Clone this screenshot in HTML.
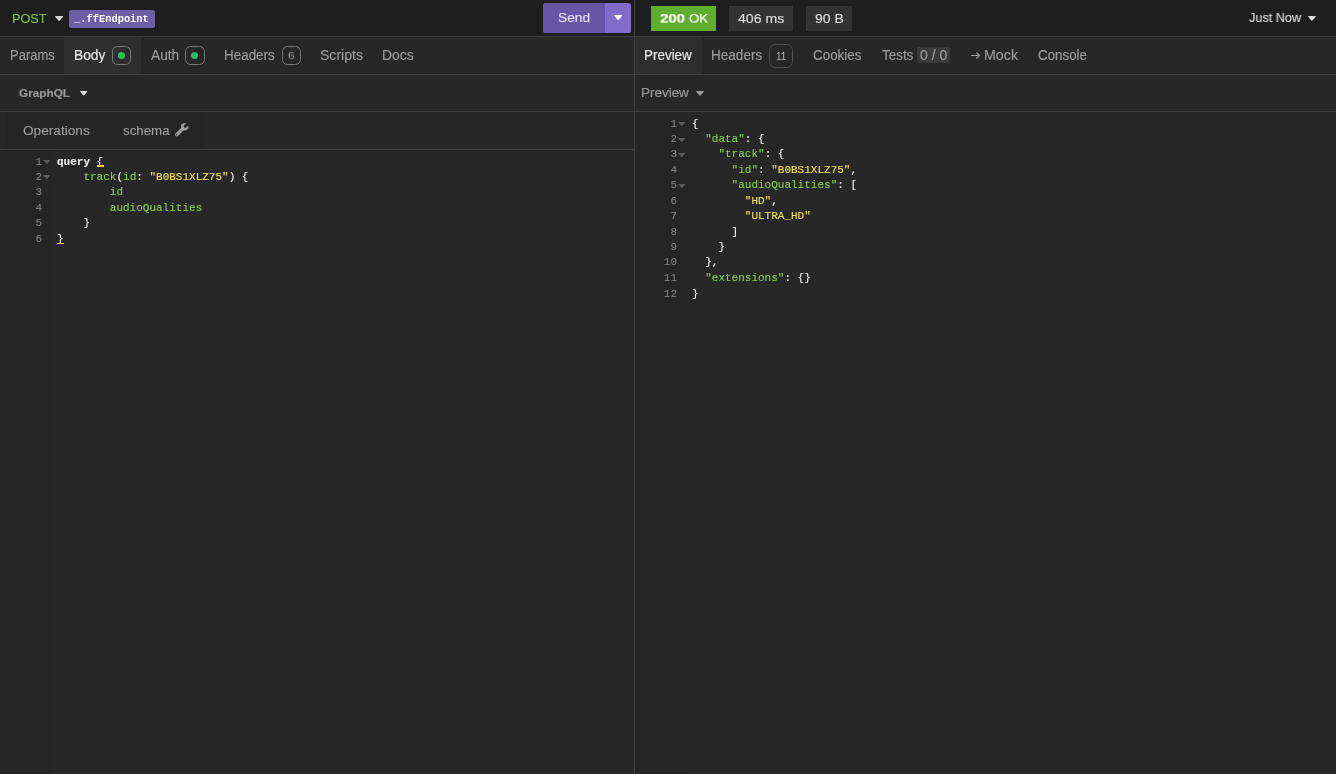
<!DOCTYPE html>
<html><head><meta charset="utf-8">
<style>
*{box-sizing:border-box;margin:0;padding:0}
html,body{width:1336px;height:774px;overflow:hidden;background:#272727;font-family:"Liberation Sans",sans-serif;color:#ddd}
.abs{position:absolute}
#root{position:relative;width:1336px;height:774px;background:#272727;overflow:hidden}
.topbar{left:0;top:0;width:1336px;height:36px;background:#1e1e1e}
.hl{height:1px;background:#3e3e3e;left:0}
.vl{width:1px;background:#424242}
.t,.code,.ln{will-change:transform}
.t{position:absolute;white-space:nowrap;-webkit-text-stroke:0.15px;transform-origin:0 0;font-size:13px;line-height:16px;color:#9c9c9c}
#b6,#b11{-webkit-text-stroke:0}
.badge{position:absolute;width:19.6px;height:19.6px;border:1px solid #7a7a7a;border-radius:5.5px;top:45.7px}
.dot{position:absolute;width:7px;height:7px;border-radius:50%;background:#27c15a;left:5.4px;top:5.4px}
.code{position:absolute;font-family:"Liberation Mono",monospace;font-size:11px;line-height:14.705px;white-space:pre;color:#f2f2f2;transform-origin:0 0;transform:scaleY(1.05);-webkit-text-stroke:0.1px}
.ln{position:absolute;font-family:"Liberation Mono",monospace;font-size:11px;line-height:14.705px;white-space:pre;color:#858585;text-align:right;transform-origin:0 0;transform:scaleY(1.05);-webkit-text-stroke:0.05px}
.g{color:#86d04c}.y{color:#f2e055}.w{color:#f4f4f4}
.pill{position:absolute;top:6px;height:25px;background:#333}
svg{position:absolute;overflow:visible}
</style></head><body><div id="root">
<div class="abs topbar"></div>
<div class="abs hl" style="top:36px;width:1336px"></div>
<div class="abs hl" style="top:74px;width:1336px"></div>
<div class="abs hl" style="top:111px;width:1336px"></div>
<div class="abs hl" style="top:149px;width:634px"></div>
<div class="abs vl" style="left:634px;top:0;height:774px"></div>

<!-- left top bar -->
<svg style="left:54.6px;top:16.2px" width="8.2" height="5.2" viewBox="0 0 8 5"><path d="M0.6 0H7.4Q8.2 0.2 7.7 0.9L4.5 4.6Q4 5.1 3.5 4.6L0.3 0.9Q-0.2 0.2 0.6 0Z" fill="#d6d6d6"/></svg>
<div class="abs" style="left:69px;top:10px;width:86px;height:18px;background:#6c5fa6;border-radius:2.5px"></div>
<div id="tag" class="code" style="left:74.3px;top:11.5px;color:#fff;font-size:10.4px;line-height:15px;font-weight:bold;transform:none;-webkit-text-stroke:0">_.ffEndpoint</div>
<div class="abs" style="left:543px;top:3px;width:62px;height:30px;background:#6557a5;border-radius:2px 0 0 2px"></div>
<div class="abs" style="left:605px;top:3px;width:26px;height:30px;background:#806dca;border-radius:0 2px 2px 0"></div>
<svg style="left:614.4px;top:15.3px" width="8.4" height="5.1" viewBox="0 0 8 5"><path d="M0.6 0H7.4Q8.2 0.2 7.7 0.9L4.5 4.6Q4 5.1 3.5 4.6L0.3 0.9Q-0.2 0.2 0.6 0Z" fill="#fff"/></svg>

<!-- active tab backgrounds -->
<div class="abs" style="left:64px;top:37px;width:77px;height:37px;background:#2e2e2e"></div>
<div class="abs" style="left:635px;top:37px;width:67px;height:37px;background:#2e2e2e"></div>
<div class="badge" style="left:111.7px"><div class="dot"></div></div>
<div class="badge" style="left:185px"><div class="dot"></div></div>
<div class="badge" style="left:281.7px"></div>
<div class="badge" style="left:768.7px;width:24px;height:23.5px;top:44.1px;border-color:#525252;border-radius:6.5px"></div>
<div class="abs" style="left:917px;top:47.2px;width:33px;height:15.4px;background:#3a3a3a;border-radius:2px"></div>

<!-- GraphQL row -->
<svg style="left:80px;top:91.2px" width="7.4" height="4.7" viewBox="0 0 8 5"><path d="M0.6 0H7.4Q8.2 0.2 7.7 0.9L4.5 4.6Q4 5.1 3.5 4.6L0.3 0.9Q-0.2 0.2 0.6 0Z" fill="#e0e0e0"/></svg>
<svg style="left:696px;top:90.6px" width="8" height="4.9" viewBox="0 0 8 5"><path d="M0.6 0H7.4Q8.2 0.2 7.7 0.9L4.5 4.6Q4 5.1 3.5 4.6L0.3 0.9Q-0.2 0.2 0.6 0Z" fill="#9c9c9c"/></svg>
<svg style="left:1308.3px;top:16.2px" width="7.8" height="4.9" viewBox="0 0 8 5"><path d="M0.6 0H7.4Q8.2 0.2 7.7 0.9L4.5 4.6Q4 5.1 3.5 4.6L0.3 0.9Q-0.2 0.2 0.6 0Z" fill="#ddd"/></svg>

<!-- operations row -->
<div class="abs" style="left:6px;top:112px;width:198px;height:37px;background:#252525"></div>
<!-- wrench -->
<svg style="left:174.5px;top:123.4px" width="13.5" height="13.5" viewBox="0 0 512 512"><path fill="#9c9c9c" d="M507.73 109.1c-2.24-9.03-13.54-12.09-20.12-5.51l-74.36 74.36-67.88-11.31-11.31-67.88 74.36-74.36c6.62-6.62 3.43-17.9-5.66-20.16-47.38-11.74-99.55.91-136.58 37.93-39.64 39.64-50.55 97.1-34.05 147.2L18.74 402.76c-24.99 24.99-24.99 65.51 0 90.5 24.99 24.99 65.51 24.99 90.5 0l213.21-213.21c50.12 16.71 107.47 5.68 147.37-34.22 37.07-37.07 49.7-89.32 37.91-136.73zM64 472c-13.25 0-24-10.75-24-24 0-13.26 10.75-24 24-24s24 10.74 24 24c0 13.25-10.75 24-24 24z"/></svg>

<!-- pills -->
<div class="pill" style="left:651px;width:65px;background:#5fae2d"></div>
<div class="pill" style="left:729px;width:64px"></div>
<div class="pill" style="left:806px;width:46px"></div>

<!-- arrow -->
<svg style="left:971px;top:52.3px" width="9.1" height="7" viewBox="0 0 9.1 7"><path d="M0 3.5H8.6M5.4 0.3L8.6 3.5L5.4 6.7" fill="none" stroke="#9c9c9c" stroke-width="1.1"/></svg>

<div id="post" class="t" style="left:12.12px;top:9.75px;font-size:12.5px;color:#7cc242;font-weight:normal;transform:scale(1.0153,1.0872)">POST</div>
<div id="send" class="t" style="left:557.81px;top:9.95px;font-size:13px;color:#e4dff5;font-weight:normal;transform:scale(1.0589,1.0398)">Send</div>
<div id="s200" class="t" style="left:659.82px;top:10.66px;font-size:13px;color:#fff;font-weight:bold;transform:scale(1.1481,0.9671)">200</div>
<div id="sok" class="t" style="left:688.98px;top:10.66px;font-size:13px;color:#fff;font-weight:normal;transform:scale(1.0164,0.9671)">OK</div>
<div id="ms" class="t" style="left:738.02px;top:10.78px;font-size:13px;color:#ddd;font-weight:normal;transform:scale(1.0858,1.0007)">406 ms</div>
<div id="sz" class="t" style="left:814.90px;top:10.78px;font-size:13px;color:#ddd;font-weight:normal;transform:scale(1.0769,1.0007)">90 B</div>
<div id="jn" class="t" style="left:1249.08px;top:9.62px;font-size:13px;color:#ddd;font-weight:normal;transform:scale(0.9756,1.0063)">Just Now</div>
<div id="params" class="t" style="left:9.84px;top:47.25px;font-size:13px;color:#9c9c9c;font-weight:normal;transform:scale(1.0007,1.0733)">Params</div>
<div id="body" class="t" style="left:73.65px;top:47.25px;font-size:13px;color:#eaeaea;font-weight:normal;transform:scale(1.0598,1.0733)">Body</div>
<div id="auth" class="t" style="left:150.86px;top:47.25px;font-size:13px;color:#9c9c9c;font-weight:normal;transform:scale(1.0525,1.0733)">Auth</div>
<div id="hdrs" class="t" style="left:223.84px;top:47.25px;font-size:13px;color:#9c9c9c;font-weight:normal;transform:scale(1.0328,1.0733)">Headers</div>
<div id="scripts" class="t" style="left:320.30px;top:47.25px;font-size:13px;color:#9c9c9c;font-weight:normal;transform:scale(1.0800,1.0733)">Scripts</div>
<div id="docs" class="t" style="left:382.11px;top:47.25px;font-size:13px;color:#9c9c9c;font-weight:normal;transform:scale(1.0698,1.0733)">Docs</div>
<div id="prev" class="t" style="left:644.44px;top:47.25px;font-size:13px;color:#eaeaea;font-weight:normal;transform:scale(1.0336,1.0733)">Preview</div>
<div id="rhdrs" class="t" style="left:711.44px;top:47.25px;font-size:13px;color:#9c9c9c;font-weight:normal;transform:scale(1.0428,1.0733)">Headers</div>
<div id="cookies" class="t" style="left:813.47px;top:47.25px;font-size:13px;color:#9c9c9c;font-weight:normal;transform:scale(1.0307,1.0733)">Cookies</div>
<div id="tests" class="t" style="left:881.70px;top:47.25px;font-size:13px;color:#9c9c9c;font-weight:normal;transform:scale(1.0324,1.0733)">Tests</div>
<div id="zz" class="t" style="left:920.20px;top:47.25px;font-size:13px;color:#9c9c9c;font-weight:normal;transform:scale(1.0754,1.0733)">0 / 0</div>
<div id="mock" class="t" style="left:984.34px;top:47.25px;font-size:13px;color:#9c9c9c;font-weight:normal;transform:scale(1.0953,1.0733)">Mock</div>
<div id="console" class="t" style="left:1038.25px;top:47.25px;font-size:13px;color:#9c9c9c;font-weight:normal;transform:scale(1.0262,1.0733)">Console</div>
<div id="gql" class="t" style="left:19.36px;top:84.63px;font-size:11.5px;color:#999;font-weight:bold;transform:scale(1.0243,1.0238)">GraphQL</div>
<div id="prev2" class="t" style="left:640.52px;top:84.93px;font-size:13px;color:#9c9c9c;font-weight:normal;transform:scale(1.0343,1.0398)">Preview</div>
<div id="ops" class="t" style="left:22.90px;top:121.68px;font-size:13px;color:#9c9c9c;font-weight:normal;transform:scale(1.0501,1.0454)">Operations</div>
<div id="schema" class="t" style="left:123.33px;top:121.68px;font-size:13px;color:#9c9c9c;font-weight:normal;transform:scale(1.0237,1.0454)">schema</div>
<div id="b6" class="t" style="left:287.55px;top:48.65px;font-size:10px;color:#9c9c9c;font-weight:normal;transform:scale(1.2161,0.9286)">6</div>
<div id="b11" class="t" style="left:776.41px;top:48.59px;font-size:10px;color:#b4b4b4;font-weight:normal;transform:scale(0.9998,0.9857)">11</div>

<!-- left editor -->
<div class="abs" style="left:0;top:150px;width:52px;height:624px;background:#252525"></div>
<div id="lln" class="ln" style="left:20.8px;top:153.93px;width:21.2px">1
2
3
4
5
6</div>
<svg style="left:43.4px;top:160px" width="7.5" height="4.3" viewBox="0 0 7.5 4.3"><path d="M0 0H7.5L3.75 4.3Z" fill="#5c5c5c"/></svg>
<svg style="left:43.4px;top:175.4px" width="7.5" height="4.3" viewBox="0 0 7.5 4.3"><path d="M0 0H7.5L3.75 4.3Z" fill="#5c5c5c"/></svg>
<div id="lcode" class="code" style="left:57.3px;top:153.93px"><b>query</b> {
    <span class="g">track</span>(<span class="g">id</span>: <span class="y">"B0BS1XLZ75"</span>) {
        <span class="g">id</span>
        <span class="g">audioQualities</span>
    }
}</div>

<div class="abs" style="left:96.5px;top:165.4px;width:7.3px;height:1.5px;background:#e8d44d"></div>
<div class="abs" style="left:57px;top:242.6px;width:7.3px;height:1.5px;background:#e8d44d"></div>
<!-- right editor -->
<div class="abs" style="left:635px;top:112px;width:53px;height:662px;background:#252525"></div>
<div id="rln" class="ln" style="left:650px;top:115.93px;width:27px">1
2
3
4
5
6
7
8
9
10
11
12</div>
<svg style="left:678.4px;top:122.1px" width="7.5" height="4.3" viewBox="0 0 7.5 4.3"><path d="M0 0H7.5L3.75 4.3Z" fill="#5c5c5c"/></svg>
<svg style="left:678.4px;top:137.5px" width="7.5" height="4.3" viewBox="0 0 7.5 4.3"><path d="M0 0H7.5L3.75 4.3Z" fill="#5c5c5c"/></svg>
<svg style="left:678.4px;top:152.9px" width="7.5" height="4.3" viewBox="0 0 7.5 4.3"><path d="M0 0H7.5L3.75 4.3Z" fill="#5c5c5c"/></svg>
<svg style="left:678.4px;top:183.7px" width="7.5" height="4.3" viewBox="0 0 7.5 4.3"><path d="M0 0H7.5L3.75 4.3Z" fill="#5c5c5c"/></svg>
<div id="rcode" class="code" style="left:692px;top:115.93px">{
  <span class="g">"data"</span>: {
    <span class="g">"track"</span>: {
      <span class="g">"id"</span>: <span class="y">"B0BS1XLZ75"</span>,
      <span class="g">"audioQualities"</span>: [
        <span class="y">"HD"</span>,
        <span class="y">"ULTRA_HD"</span>
      ]
    }
  },
  <span class="g">"extensions"</span>: {}
}</div>
</div></body></html>
